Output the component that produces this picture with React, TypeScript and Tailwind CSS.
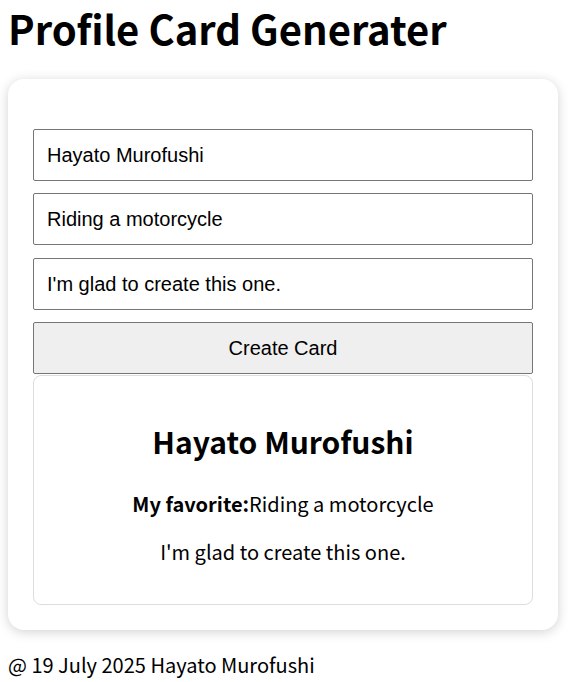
import { useState } from "react";

const sans = "font-['Noto_Sans_CJK_JP','Noto_Sans',sans-serif]";
const arial = "font-['Liberation_Sans',Arial,sans-serif]";
const field = `${arial} h-[52px] rounded-[2px] border border-[#767676] px-[13px] text-[20px] outline-none`;

export default function App() {
    const [name, setName] = useState("Hayato Murofushi");
    const [favorite, setFavorite] = useState("Riding a motorcycle");
    const [message, setMessage] = useState("I'm glad to create this one.");

    return (
        <div className={`${sans} min-h-[682px] bg-white p-2 text-black`}>
            <h1 className="text-[40px] font-bold leading-[48px] -mt-[4px]">Profile Card Generater</h1>

            <div className="mt-[27px] w-[550px] rounded-2xl bg-white px-[25px] pb-[25px] pt-[50px] shadow-[0_2px_12px_rgba(0,0,0,0.18)]">
                <div className="flex flex-col gap-3">
                    <input value={name} onChange={(e) => setName(e.target.value)} className={field} />
                    <input value={favorite} onChange={(e) => setFavorite(e.target.value)} className={field} />
                    <input value={message} onChange={(e) => setMessage(e.target.value)} className={`${field} mt-px`} />
                    <button
                        type="button"
                        className={`${arial} h-[52px] rounded-[2px] border border-[#767676] bg-[#efefef] text-[20px]`}
                    >
                        Create Card
                    </button>
                </div>

                <div className="mt-px flex h-[230px] flex-col items-center rounded-lg border border-[#dddddd] pt-[45px] text-center">
                    <h2 className="text-[30px] font-bold leading-[40px]">{name}</h2>
                    <p className="mt-[31px] text-[20px] leading-[24px]">
                        <span className="font-bold">My favorite:</span>
                        {favorite}
                    </p>
                    <p className="mt-[24px] text-[20px] leading-[24px]">{message}</p>
                </div>
            </div>

            <p className="mt-[23px] text-[20px] leading-[24px]">@ 19 July 2025 Hayato Murofushi</p>
        </div>
    );
}
